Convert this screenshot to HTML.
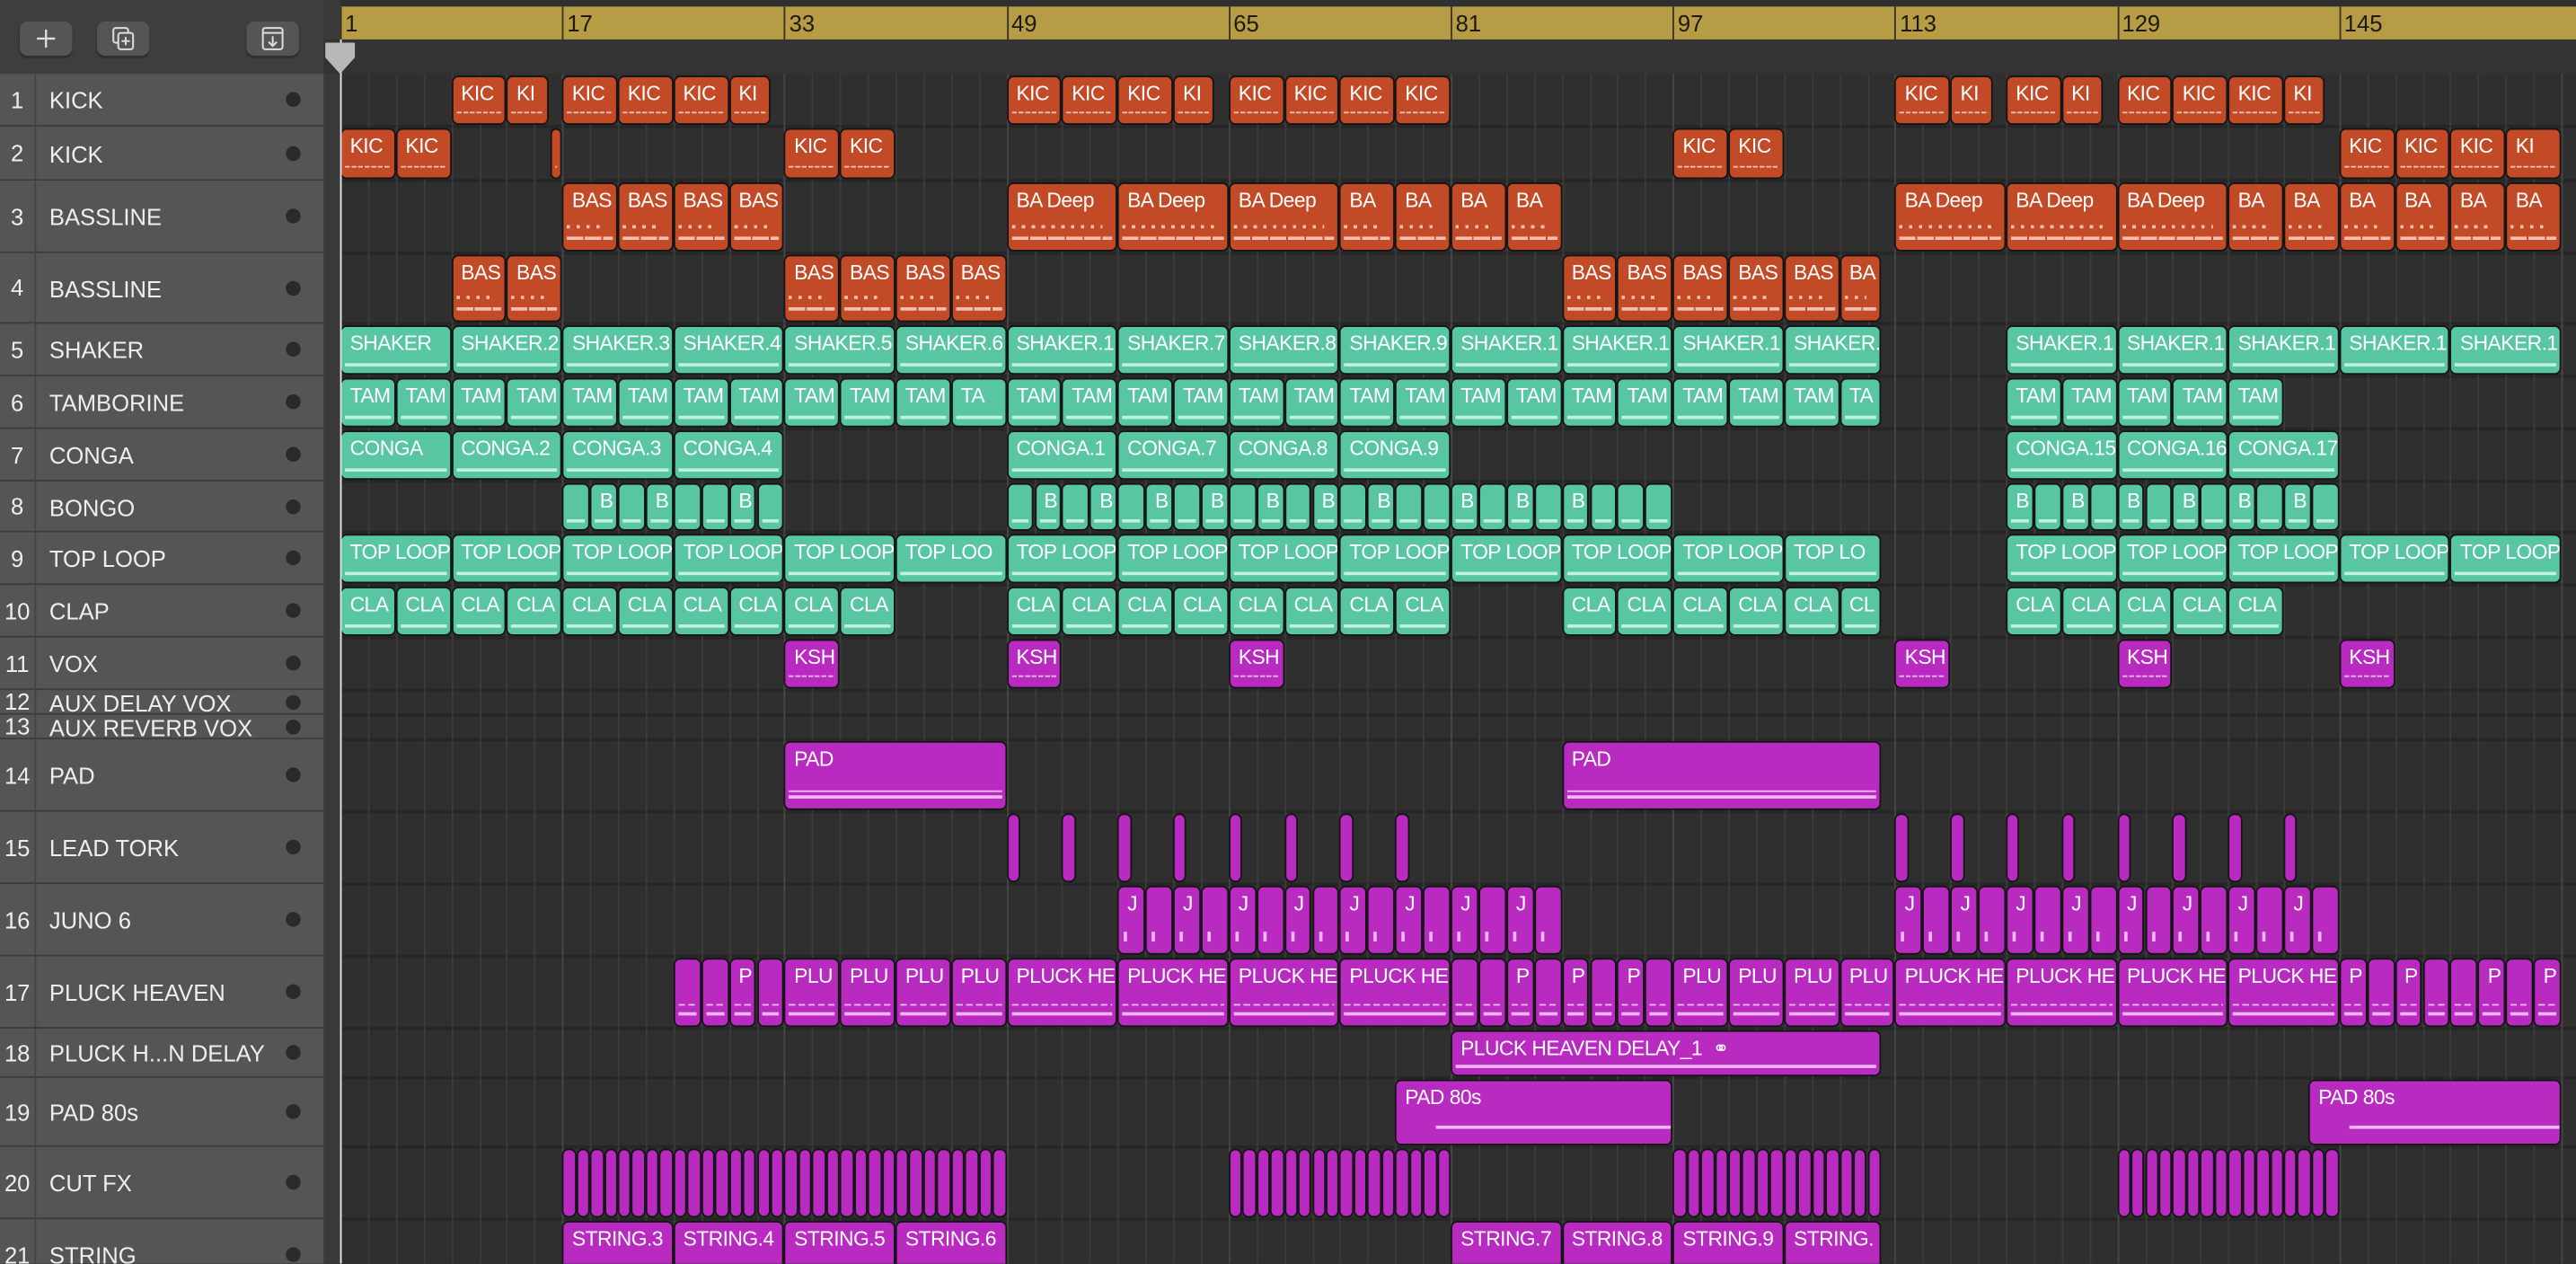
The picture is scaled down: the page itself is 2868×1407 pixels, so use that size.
<!DOCTYPE html>
<html><head><meta charset="utf-8">
<style>
html,body{margin:0;padding:0;background:#2f2f2f;overflow:hidden;}
body{width:2868px;height:1406px;}
#w{position:absolute;left:0;top:0;width:1568px;height:769px;transform:scale(1.8291);transform-origin:0 0;font-family:"Liberation Sans",sans-serif;background:#2f2f2f;overflow:hidden;}
.abs{position:absolute;}
#left{left:0;top:0;width:197px;height:769px;background:#4a4a4a;}
#hdr{left:0;top:0;width:197px;height:45px;background:#3e3e3e;}
.btn{position:absolute;top:13px;width:32px;height:21px;border-radius:5px;background:#555;box-shadow:0 1px 1px #2a2a2a;}
.row{position:absolute;left:0;width:197px;background:#555;border-bottom:1.5px solid #3c3c3c;box-sizing:border-box;color:#eee;font-size:14px;}
.row .n{position:absolute;left:0;width:22px;text-align:center;border-right:1px solid #444;height:100%;box-sizing:border-box;}
.row .t{position:absolute;left:30px;white-space:nowrap;}
.row .d{position:absolute;left:174px;width:9px;height:9px;border-radius:50%;background:#2a2a2a;}
#sep{left:197px;top:0;width:10px;height:769px;background:#3a3a3a;}
#ruler{left:207px;top:4px;width:1361px;height:20px;background:#b59c45;}
#rulerlow{left:197px;top:24px;width:1371px;height:21px;background:#333;}
.clip{position:absolute;box-sizing:border-box;border:1px solid #151515;border-radius:4px;overflow:hidden;color:#fff;font-size:12.5px;letter-spacing:-0.3px;white-space:nowrap;}
.clip span{position:absolute;left:5px;top:3px;}
.ln{position:absolute;left:2px;right:2px;height:2px;}
</style></head><body><div id="w">
<div id="g" class="abs" style="left:0;top:0;width:1568px;height:769px"></div>
<div id="left" class="abs"></div>
<div id="hdr" class="abs">
 <div class="btn" style="left:12px"><svg width="32" height="21"><path d="M16 5v11M10.5 10.5h11" stroke="#ddd" stroke-width="1.3"/></svg></div>
 <div class="btn" style="left:59px"><svg width="32" height="21"><rect x="10" y="4" width="9" height="9" rx="1.5" fill="none" stroke="#ddd" stroke-width="1.1"/><rect x="13" y="7" width="9" height="10" rx="1.5" fill="#555" stroke="#ddd" stroke-width="1.1"/><path d="M17.5 9.5v5M15 12h5" stroke="#ddd" stroke-width="1.1"/></svg></div>
 <div class="btn" style="left:150px"><svg width="32" height="21"><rect x="10" y="4" width="12" height="13" rx="1.5" fill="none" stroke="#ddd" stroke-width="1.1"/><path d="M10 7h12M16 9v6M13.5 12.5l2.5 2.5 2.5-2.5" fill="none" stroke="#ddd" stroke-width="1.1"/></svg></div>
</div>
<div id="rows"></div>
<div id="sep" class="abs"></div>
<div id="rulerlow" class="abs"></div>
<div id="ruler" class="abs"></div>
<div id="clips"></div>
<div class="abs" style="left:206.5px;top:24px;width:1px;height:745px;background:#e8e8e8"></div>
<svg class="abs" style="left:197px;top:24px" width="20" height="22"><path d="M1 2h18v9l-9 10-9-10z" fill="#b8b8b8"/></svg>
</div>
<script>
var u=8.45,X0=207;
function bx(b){return X0+b*u;}
var rows=[[45,77,"1","KICK"],[77,110,"2","KICK"],[110,154,"3","BASSLINE"],[154,197,"4","BASSLINE"],[197,229,"5","SHAKER"],[229,261,"6","TAMBORINE"],[261,293,"7","CONGA"],[293,324,"8","BONGO"],[324,356,"9","TOP LOOP"],[356,388,"10","CLAP"],[388,420,"11","VOX"],[420,435,"12","AUX DELAY VOX"],[435,450,"13","AUX REVERB VOX"],[450,494,"14","PAD"],[494,538,"15","LEAD TORK"],[538,582,"16","JUNO 6"],[582,626,"17","PLUCK HEAVEN"],[626,656,"18","PLUCK H...N DELAY"],[656,698,"19","PAD 80s"],[698,742,"20","CUT FX"],[742,786,"21","STRING"]];
var h="",g="";
rows.forEach(function(r){var ht=r[1]-r[0];var ty=Math.max(0,(ht-16)/2);
h+='<div class="row" style="top:'+r[0]+'px;height:'+ht+'px"><div class="n" style="line-height:'+ht+'px">'+r[2]+'</div><div class="t" style="top:'+ty+'px">'+r[3]+'</div><div class="d" style="top:'+(ht/2-5)+'px"></div></div>';
g+='<div class="abs" style="left:207px;top:'+(r[1]-1)+'px;width:1361px;height:1.5px;background:#262626"></div>';
});
document.getElementById("rows").innerHTML=h;
for(var b=0;b<=160;b+=2){var big=(b%16==0);
g+='<div class="abs" style="left:'+bx(b)+'px;top:45px;width:1px;height:724px;background:'+(big?'#474747':'#3b3b3b')+'"></div>';
g+='<div class="abs" style="left:'+bx(b)+'px;top:30px;width:1px;height:15px;background:#4a4a4a"></div>';}
document.getElementById("g").innerHTML=g;
var rh="";
for(var b=0;b<160;b+=16){rh+='<div class="abs" style="left:'+(b*u)+'px;top:0;width:1px;height:20px;background:#3a3220"></div><div class="abs" style="left:'+(b*u+3)+'px;top:2px;font-size:14px;color:#1e1a10">'+(b+1)+'</div>';}
document.getElementById("ruler").innerHTML=rh;
var RED="#c34a27",TEAL="#58c6a3",PUR="#b82ac0";
var C="";
function clip(row,s,e,lab,col,pat){var r=rows[row-1];var top=r[0]+1,ht=r[1]-r[0]-2;if(row==21)ht=30;
var x=bx(s),w=(e-s)*u;
var inner='<span>'+(lab||"")+'</span>';
var lc=col==TEAL?"#bff0e0":(col==RED?"#f3c0b0":"#f0b8f4");
if(pat=="line")inner+='<div class="ln" style="bottom:4px;background:'+lc+'"></div>';
if(pat=="dash")inner+='<div class="ln" style="bottom:6px;height:1.5px;background:repeating-linear-gradient(90deg,'+lc+' 0 3px,transparent 3px 4px)"></div>';
if(pat=="bass")inner+='<div class="ln" style="bottom:13px;height:2px;background:repeating-linear-gradient(90deg,'+lc+' 0 2px,transparent 2px 6px);right:8px"></div><div class="ln" style="bottom:6px;background:repeating-linear-gradient(90deg,'+lc+' 0 10px,transparent 10px 11px)"></div>';
if(pat=="pluck")inner+='<div class="ln" style="bottom:12px;height:1.5px;background:repeating-linear-gradient(90deg,'+lc+' 0 4px,transparent 4px 6px)"></div><div class="ln" style="bottom:6px;background:'+lc+'"></div>';
if(pat=="juno")inner+='<div class="abs" style="left:3px;bottom:7px;width:2px;height:6px;background:'+lc+'"></div>';
if(pat=="pad")inner+='<div class="ln" style="bottom:6px;background:'+lc+'"></div><div class="ln" style="bottom:10px;height:1px;background:'+lc+'"></div>';
if(pat=="pad80")inner+='<div class="ln" style="bottom:9px;left:24px;right:0;background:'+lc+'"></div>';
C+='<div class="clip" style="left:'+x+'px;top:'+top+'px;width:'+w+'px;height:'+ht+'px;background:'+col+'">'+inner+'</div>';}
function seq(row,s,n,len,labs,col,pat){for(var i=0;i<n;i++){var l=typeof labs=="function"?labs(i):labs;clip(row,s+i*len,s+(i+1)*len,l,col,pat);}}
[[8,12,"KIC"],[12,15,"KI"],[16,20,"KIC"],[20,24,"KIC"],[24,28,"KIC"],[28,31,"KI"],[48,52,"KIC"],[52,56,"KIC"],[56,60,"KIC"],[60,63,"KI"],[64,68,"KIC"],[68,72,"KIC"],[72,76,"KIC"],[76,80,"KIC"],[112,116,"KIC"],[116,119,"KI"],[120,124,"KIC"],[124,127,"KI"],[128,132,"KIC"],[132,136,"KIC"],[136,140,"KIC"],[140,143,"KI"]].forEach(function(c){clip(1,c[0],c[1],c[2],RED,"dash");});
[[0,4,"KIC"],[4,8,"KIC"],[15.1,16,""],[32,36,"KIC"],[36,40,"KIC"],[96,100,"KIC"],[100,104,"KIC"],[144,148,"KIC"],[148,152,"KIC"],[152,156,"KIC"],[156,160,"KI"]].forEach(function(c){clip(2,c[0],c[1],c[2],RED,"dash");});
seq(3,16,4,4,"BAS",RED,"bass");
[[48,56,"BA Deep"],[56,64,"BA Deep"],[64,72,"BA Deep"],[72,76,"BA"],[76,80,"BA"],[80,84,"BA"],[84,88,"BA"],[112,120,"BA Deep"],[120,128,"BA Deep"],[128,136,"BA Deep"],[136,140,"BA"],[140,144,"BA"],[144,148,"BA"],[148,152,"BA"],[152,156,"BA"],[156,160,"BA"]].forEach(function(c){clip(3,c[0],c[1],c[2],RED,"bass");});
seq(4,8,2,4,"BAS",RED,"bass");seq(4,32,4,4,"BAS",RED,"bass");seq(4,88,5,4,"BAS",RED,"bass");clip(4,108,111,"BA",RED,"bass");
var sh=["SHAKER","SHAKER.2","SHAKER.3","SHAKER.4","SHAKER.5","SHAKER.6","SHAKER.1","SHAKER.7","SHAKER.8","SHAKER.9","SHAKER.1","SHAKER.1","SHAKER.1","SHAKER."];
sh.forEach(function(l,i){clip(5,i*8,i==13?i*8+7:i*8+8,l,TEAL,"line");});
seq(5,120,5,8,"SHAKER.1",TEAL,"line");
seq(6,0,12,4,function(i){return i==11?"TA":"TAM"},TEAL,"line");
seq(6,48,15,4,"TAM",TEAL,"line");clip(6,108,111,"TA",TEAL,"line");
seq(6,120,5,4,"TAM",TEAL,"line");
[[0,"CONGA"],[8,"CONGA.2"],[16,"CONGA.3"],[24,"CONGA.4"],[48,"CONGA.1"],[56,"CONGA.7"],[64,"CONGA.8"],[72,"CONGA.9"],[120,"CONGA.15"],[128,"CONGA.16"],[136,"CONGA.17"]].forEach(function(c){clip(7,c[0],c[0]+8,c[1],TEAL,"line");});
seq(8,16,8,2,function(i){return [1,3,6].indexOf(i)>=0?"B":""},TEAL,"line");
seq(8,48,24,2,function(i){return [1,3,5,7,9,11,13,16,18,20].indexOf(i)>=0?"B":""},TEAL,"line");
seq(8,120,12,2,function(i){return [0,2,4,6,8,10].indexOf(i)>=0?"B":""},TEAL,"line");
seq(9,0,6,8,function(i){return i==5?"TOP LOO":"TOP LOOP"},TEAL,"line");
seq(9,48,7,8,"TOP LOOP",TEAL,"line");clip(9,104,111,"TOP LO",TEAL,"line");
seq(9,120,5,8,"TOP LOOP",TEAL,"line");
seq(10,0,10,4,"CLA",TEAL,"line");seq(10,48,8,4,"CLA",TEAL,"line");
seq(10,88,5,4,"CLA",TEAL,"line");clip(10,108,111,"CL",TEAL,"line");seq(10,120,5,4,"CLA",TEAL,"line");
[32,48,64,112,128,144].forEach(function(b){clip(11,b,b+4,"KSH",PUR,"dash");});
clip(14,32,48,"PAD",PUR,"pad");clip(14,88,111,"PAD",PUR,"pad");
for(var b=48;b<=76;b+=4)clip(15,b,b+1,"",PUR,"");
for(var b=112;b<=140;b+=4)clip(15,b,b+1,"",PUR,"");
seq(16,56,16,2,function(i){return i%2==0&&i<14||i==14?"J":""},PUR,"juno");
seq(16,112,16,2,function(i){return i%2==0?"J":""},PUR,"juno");
seq(17,24,4,2,function(i){return i==2?"P":""},PUR,"pluck");
seq(17,32,4,4,"PLU",PUR,"pluck");
seq(17,48,4,8,"PLUCK HE",PUR,"pluck");
seq(17,80,8,2,function(i){return [2,4,6].indexOf(i)>=0?"P":""},PUR,"pluck");
seq(17,96,4,4,"PLU",PUR,"pluck");
seq(17,112,4,8,"PLUCK HE",PUR,"pluck");
seq(17,144,8,2,function(i){return [0,2,5,7].indexOf(i)>=0?"P":""},PUR,"pluck");
clip(18,80,111,"PLUCK HEAVEN DELAY_1 &nbsp;<span style=\"position:static;font-size:12px\">&#9901;</span>",PUR,"line");
clip(19,76,96,"PAD 80s",PUR,"pad80");clip(19,141.8,160,"PAD 80s",PUR,"pad80");
seq(20,16,32,1,"",PUR,"");seq(20,64,16,1,"",PUR,"");seq(20,96,15,1,"",PUR,"");seq(20,128,16,1,"",PUR,"");
[[16,"STRING.3"],[24,"STRING.4"],[32,"STRING.5"],[40,"STRING.6"],[80,"STRING.7"],[88,"STRING.8"],[96,"STRING.9"]].forEach(function(c){clip(21,c[0],c[0]+8,c[1],PUR,"");});
clip(21,104,111,"STRING.",PUR,"");
document.getElementById("clips").innerHTML=C;
</script>
</body></html>
